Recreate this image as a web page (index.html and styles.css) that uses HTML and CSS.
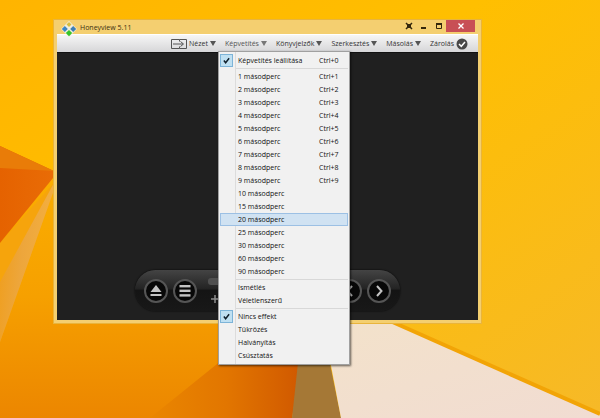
FILE: index.html
```
<!DOCTYPE html>
<html lang="hu">
<head>
    <meta charset="utf-8">
    <title>Honeyview 5.11</title>
    <link rel="stylesheet" href="styles.css">
</head>

<body>
    <div class="desktop">
        <svg class="wallpaper" viewBox="0 0 600 418" preserveAspectRatio="none" aria-hidden="true">
            <defs>
                <linearGradient id="sky" x1="0" y1="0" x2="1" y2="1">
                    <stop offset="0" stop-color="#ffb400"/>
                    <stop offset="0.4" stop-color="#ffbf00"/>
                    <stop offset="1" stop-color="#f6b928"/>
                </linearGradient>
                <linearGradient id="fold" x1="0" y1="0" x2="1" y2="0">
                    <stop offset="0" stop-color="#e56200"/>
                    <stop offset="1" stop-color="#e96c06"/>
                </linearGradient>
                <linearGradient id="strip" x1="0" y1="0" x2="1" y2="0.3">
                    <stop offset="0" stop-color="#f09c14"/>
                    <stop offset="0.5" stop-color="#eda63c"/>
                    <stop offset="1" stop-color="#f4b040"/>
                </linearGradient>
                <linearGradient id="ground" x1="0" y1="0" x2="0" y2="1">
                    <stop offset="0" stop-color="#fbae00"/>
                    <stop offset="0.5" stop-color="#f6a000"/>
                    <stop offset="1" stop-color="#ec8600"/>
                </linearGradient>
                <linearGradient id="deep" x1="0" y1="0" x2="1" y2="0">
                    <stop offset="0" stop-color="#ea8600"/>
                    <stop offset="0.5" stop-color="#e27600"/>
                    <stop offset="1" stop-color="#d05800"/>
                </linearGradient>
                <linearGradient id="paper" x1="0" y1="0" x2="1" y2="1">
                    <stop offset="0" stop-color="#f3e2ca"/>
                    <stop offset="1" stop-color="#f1dcd2"/>
                </linearGradient>
            </defs>
            <rect width="600" height="418" fill="url(#sky)"/>
            <path d="M54 176 L310 300 L292 418 H0 V243z" fill="url(#ground)"/>
            <path d="M0 243 L54 183 L54 190 L0 342z" fill="#f6a40c"/>
            <path d="M0 282 L54 183 L54 190 L0 342z" fill="url(#strip)"/>
            <path d="M0 146 L54 171 L53 178 L0 243z" fill="url(#fold)"/>
            <path d="M0 168 L54 171 L0 146z" fill="#e97c08"/>
            <path d="M150 418 L222 360 H302 L292 418z" fill="url(#deep)"/>
            <path d="M300 344 H326 L341 418 H292z" fill="#a57836"/>
            <path d="M322 318 H384 L600 414 V418 H341z" fill="url(#paper)"/>
            <path d="M388 320 L600 414" stroke="#f2a406" stroke-width="4"/>
        </svg>

        <main class="window">
            <header class="titlebar">
                <svg class="logo" viewBox="0 0 16 16" aria-hidden="true">
                    <path d="M8 0 L16 8 L8 16 L0 8z" fill="#f1eedc"/>
                    <path d="M8 1 L10.500 3.500 L8 6 L5.500 3.500z" fill="#d9bd3c"/>
                    <path d="M3.800 5 L6.800 8 L3.800 11 L.8 8z" fill="#3b86c6"/>
                    <path d="M12.200 5 L15.200 8 L12.200 11 L9.200 8z" fill="#3f7fb4"/>
                    <path d="M8 9 L11.200 12 L8 15.200 L4.800 12z" fill="#35c42a"/>
                </svg>
                <h1 class="title">Honeyview 5.11</h1>
                <div class="window-buttons">
                    <button type="button" class="win-button" aria-label="Pin">
                        <svg viewBox="0 0 8 8"><path d="M1 1l2 2M7 1L5 3M1 7l2-2M7 7L5 5" stroke="#33270c" stroke-width="1.500"/><rect x="2" y="2" width="4" height="4" fill="#33270c"/></svg>
                    </button>
                    <button type="button" class="win-button" aria-label="Minimize">
                        <svg viewBox="0 0 8 8"><rect x="1" y="5" width="5" height="2" fill="#33270c"/></svg>
                    </button>
                    <button type="button" class="win-button" aria-label="Maximize">
                        <svg viewBox="0 0 8 8"><path d="M1.500 2v4.500h5V2" fill="none" stroke="#33270c"/><path d="M1 2h6" stroke="#33270c" stroke-width="2"/></svg>
                    </button>
                    <button type="button" class="win-button close" aria-label="Close">
                        <svg viewBox="0 0 8 8"><path d="M1.500 1.500l5 5M6.500 1.500l-5 5" stroke="#fff" stroke-width="1.300"/></svg>
                    </button>
                </div>
            </header>

            <nav class="toolbar">
                <button type="button" class="tool">
                    <svg class="fit-icon" viewBox="0 0 16 10" fill="none" stroke="#555" stroke-width="1"><path d="M8.500 .5h-8v9h8M8.500 .5h7v9h-7M8.500 .5v2M8.500 7.500v2M2 5h10M9.500 2.500L12.500 5l-3 2.500"/></svg>
                    Nézet<span class="arrow"></span>
                </button>
                <div class="dropdown">
                    <button type="button" class="tool active" aria-expanded="true">Képvetítés<span class="arrow"></span></button>
                    <div class="menu" role="menu">
                        <button type="button" class="item checked" role="menuitemcheckbox" aria-checked="true"><svg class="tick" viewBox="0 0 8 8"><path d="M1 4l2 2.500L7 1.500" fill="none" stroke="#10202c" stroke-width="1.700"/></svg>Képvetítés leállítása<kbd>Ctrl+0</kbd></button>
                        <hr>
                        <button type="button" class="item" role="menuitem">1 másodperc<kbd>Ctrl+1</kbd></button>
                        <button type="button" class="item" role="menuitem">2 másodperc<kbd>Ctrl+2</kbd></button>
                        <button type="button" class="item" role="menuitem">3 másodperc<kbd>Ctrl+3</kbd></button>
                        <button type="button" class="item" role="menuitem">4 másodperc<kbd>Ctrl+4</kbd></button>
                        <button type="button" class="item" role="menuitem">5 másodperc<kbd>Ctrl+5</kbd></button>
                        <button type="button" class="item" role="menuitem">6 másodperc<kbd>Ctrl+6</kbd></button>
                        <button type="button" class="item" role="menuitem">7 másodperc<kbd>Ctrl+7</kbd></button>
                        <button type="button" class="item" role="menuitem">8 másodperc<kbd>Ctrl+8</kbd></button>
                        <button type="button" class="item" role="menuitem">9 másodperc<kbd>Ctrl+9</kbd></button>
                        <button type="button" class="item" role="menuitem">10 másodperc</button>
                        <button type="button" class="item" role="menuitem">15 másodperc</button>
                        <button type="button" class="item selected" role="menuitem">20 másodperc</button>
                        <button type="button" class="item" role="menuitem">25 másodperc</button>
                        <button type="button" class="item" role="menuitem">30 másodperc</button>
                        <button type="button" class="item" role="menuitem">60 másodperc</button>
                        <button type="button" class="item" role="menuitem">90 másodperc</button>
                        <hr>
                        <button type="button" class="item" role="menuitem">Ismétlés</button>
                        <button type="button" class="item" role="menuitem">Véletlenszerű</button>
                        <hr>
                        <button type="button" class="item checked" role="menuitemcheckbox" aria-checked="true"><svg class="tick" viewBox="0 0 8 8"><path d="M1 4l2 2.500L7 1.500" fill="none" stroke="#10202c" stroke-width="1.700"/></svg>Nincs effekt</button>
                        <button type="button" class="item" role="menuitem">Tükrözés</button>
                        <button type="button" class="item" role="menuitem">Halványítás</button>
                        <button type="button" class="item" role="menuitem">Csúsztatás</button>
                    </div>
                </div>
                <button type="button" class="tool">Könyvjelzők<span class="arrow"></span></button>
                <button type="button" class="tool">Szerkesztés<span class="arrow"></span></button>
                <button type="button" class="tool">Másolás<span class="arrow"></span></button>
                <button type="button" class="tool">Zárolás
                    <svg class="lock-icon" viewBox="0 0 12 12"><circle cx="6" cy="6" r="5.500" fill="#484848"/><path d="M3 6l2.300 2.300L9 4" fill="none" stroke="#fff" stroke-width="1.500"/></svg>
                </button>
            </nav>

            <section class="stage">
                <div class="controls">
                    <button type="button" class="round" aria-label="Open">
                        <svg viewBox="0 0 12 12" fill="#c4c4c4"><path d="M6 0l5.500 7H.5z"/><rect x=".5" y="9" width="11" height="2"/></svg>
                    </button>
                    <button type="button" class="round" aria-label="List">
                        <svg viewBox="0 0 12 12" fill="#c4c4c4"><rect x=".5" width="11" height="2.400"/><rect x=".5" y="4.600" width="11" height="2.400"/><rect x=".5" y="9.200" width="11" height="2.400"/></svg>
                    </button>
                    <div class="zoom">
                        <div class="track"></div>
                        <button type="button" class="plus" aria-label="Zoom in">
                            <svg viewBox="0 0 8 8"><path d="M4 0v8M0 4h8" stroke="#8c8c8c" stroke-width="1.500"/></svg>
                        </button>
                    </div>
                    <button type="button" class="round" aria-label="Previous">
                        <svg viewBox="0 0 12 12" fill="none" stroke="#b8b8b8" stroke-width="2"><path d="M8 1L3.500 6 8 11"/></svg>
                    </button>
                    <button type="button" class="round" aria-label="Next">
                        <svg viewBox="0 0 12 12" fill="none" stroke="#c4c4c4" stroke-width="2"><path d="M4 1l4.500 5L4 11"/></svg>
                    </button>
                </div>
            </section>
        </main>
    </div>
</body>
</html>
```
FILE: styles.css
```
* {
    margin: 0;
    padding: 0;
    box-sizing: border-box;
    font-family: "Open Sans", "Noto Sans", sans-serif;
}

button {
    border: none;
    background: none;
    color: inherit;
    font-size: 7px;
    cursor: pointer;
}

.desktop {
    position: relative;
    display: flex;
    min-height: 100vh;
    padding: 20px 119px 95px 54px;
    background: #fdb900;
}
.wallpaper {
    position: absolute;
    top: 0;
    left: 0;
    width: 100%;
    height: 100%;
}

.window {
    position: relative;
    flex: 1;
    display: flex;
    flex-direction: column;
    padding: 0 3px 3px;
    background: #f4cf70;
    box-shadow: 0 0 0 1px #e9b43c;
}

.titlebar {
    display: flex;
    align-items: flex-start;
    height: 14px;
    padding-left: 4px;
}
.logo {
    position: relative;
    z-index: 1;
    width: 16px;
    height: 16px;
    margin-top: 1px;
    flex: none;
}
.title {
    margin-left: 3px;
    font-size: 7px;
    line-height: 15px;
    font-weight: normal;
    color: #3b2f12;
}
.window-buttons {
    display: flex;
    margin-left: auto;
    margin-right: 3px;
}
.win-button {
    width: 15px;
    height: 12px;
    display: flex;
    align-items: center;
    justify-content: center;
}
.win-button svg {
    width: 8px;
    height: 8px;
}
.close {
    width: 29px;
    background: #c84f55;
}

.toolbar {
    display: flex;
    align-items: center;
    justify-content: flex-end;
    gap: 9px;
    height: 18px;
    padding-right: 10px;
    background: linear-gradient(#f6f6f6, #d6d6d8);
    border-top: 1px solid #fff;
    color: #333;
}
.tool {
    display: flex;
    align-items: center;
    gap: 2px;
    height: 17px;
    white-space: nowrap;
}
.active {
    color: #555;
}
.arrow {
    border: 3px solid transparent;
    border-top: 5px solid #555;
    border-bottom: none;
}
.active .arrow {
    border-top-color: #777;
}
.fit-icon {
    width: 16px;
    height: 10px;
}
.lock-icon {
    width: 12px;
    height: 12px;
}

.dropdown {
    position: relative;
}
.menu {
    position: absolute;
    z-index: 2;
    top: 16px;
    left: -7px;
    width: 132px;
    padding: 2px 1px;
    background: linear-gradient(90deg, transparent 16px, #dcdcdc 16px, #dcdcdc 17px, transparent 17px) #f1f1f1;
    border: 1px solid #a0a0a0;
    box-shadow: 1px 1px 2px rgba(0, 0, 0, 0.6);
    color: #111;
}
.item {
    position: relative;
    display: flex;
    align-items: center;
    width: 100%;
    height: 13px;
    padding: 0 8px 0 17px;
    border: 1px solid transparent;
    white-space: nowrap;
}
.item kbd {
    width: 20px;
    margin-left: auto;
    text-align: left;
}
.selected {
    background: #d0e2f2;
    border-color: #9cc0e4;
}
.tick {
    position: absolute;
    top: -1px;
    left: -1px;
    width: 13px;
    height: 13px;
    padding: 2px;
    background: #bfe0f2;
    border: 1px solid #7db4d8;
}
.menu hr {
    height: 1px;
    margin: 1px 0 1px 16px;
    border: none;
    background: #d8d8d8;
}

.stage {
    flex: 1;
    display: flex;
    align-items: flex-end;
    justify-content: center;
    padding-bottom: 9px;
    background: #202020;
    border-top: 1px solid #111;
}
.controls {
    display: flex;
    align-items: center;
    gap: 5px;
    width: 265px;
    height: 41px;
    padding: 0 9px;
    border-radius: 21px;
    background: linear-gradient(#444, #242424 45%, #141414 50%, #181818);
    box-shadow: 0 0 2px #000;
}
.round {
    display: flex;
    align-items: center;
    justify-content: center;
    width: 24px;
    height: 24px;
    border: 2px solid #555;
    border-radius: 50%;
    background: #080808;
}
.round svg {
    width: 12px;
    height: 12px;
}
.zoom {
    flex: 1;
    display: flex;
    flex-direction: column;
    align-items: flex-start;
    gap: 10px;
    padding: 0 6px;
}
.track {
    width: 100%;
    height: 7px;
    border-radius: 3px;
    background: #505050;
}
.plus {
    display: flex;
    margin-left: 3px;
}
.plus svg {
    width: 8px;
    height: 8px;
}
```
